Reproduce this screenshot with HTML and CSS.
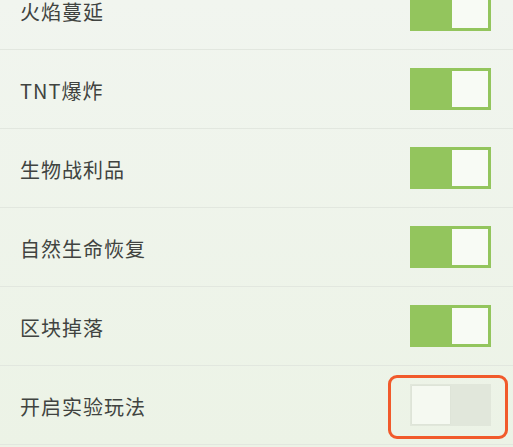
FILE: index.html
```html
<!DOCTYPE html>
<html lang="zh-CN">
<head>
    <meta charset="UTF-8">
    <meta name="viewport" content="width=device-width, initial-scale=1.0">
    <title>游戏设置</title>
    <link rel="stylesheet" href="styles.css">
</head>
<body>

    <div class="settings-list">
        <div class="setting-row">
            <span class="setting-name">火焰蔓延</span>
            <span class="toggle on"><span class="knob"></span></span>
        </div>
        <div class="setting-row">
            <span class="setting-name">TNT爆炸</span>
            <span class="toggle on"><span class="knob"></span></span>
        </div>
        <div class="setting-row">
            <span class="setting-name">生物战利品</span>
            <span class="toggle on"><span class="knob"></span></span>
        </div>
        <div class="setting-row">
            <span class="setting-name">自然生命恢复</span>
            <span class="toggle on"><span class="knob"></span></span>
        </div>
        <div class="setting-row">
            <span class="setting-name">区块掉落</span>
            <span class="toggle on"><span class="knob"></span></span>
        </div>
        <div class="setting-row">
            <span class="setting-name">开启实验玩法</span>
            <span class="toggle off highlight"><span class="knob"></span></span>
        </div>
    </div>

</body>
</html>
```

FILE: styles.css
```css
body {
    margin: 0;
    padding: 0;
    font-family: "Noto Sans CJK SC", "Noto Sans", sans-serif;
    background: linear-gradient(#f1f5ef, #ecf3e6);
    height: 447px;
    overflow: hidden;
}
.settings-list {
    margin-top: -29px;
}
.setting-row {
    display: flex;
    justify-content: space-between;
    align-items: center;
    height: 78px;
    padding: 0 22px 0 20px;
    border-bottom: 1px solid #e2e7df;
}
.setting-name {
    font-size: 20px;
    color: #404340;
    letter-spacing: 1px;
    padding-top: 2px;
}
.toggle {
    position: relative;
    display: flex;
    width: 81px;
    height: 42px;
    box-sizing: border-box;
    padding: 3px;
}
.toggle.on {
    background-color: #93c55d;
    justify-content: flex-end;
}
.toggle.off {
    background-color: #e1e7db;
    justify-content: flex-start;
    padding: 2px;
}
.knob {
    width: 36px;
    height: 100%;
    background-color: #f8fbf5;
}
.toggle.off .knob {
    width: 38px;
    background-color: #f5f9f1;
    box-shadow: 0 0 1px #cfd6c9;
}
.highlight::after {
    content: "";
    position: absolute;
    left: -22px;
    right: -17px;
    top: -9px;
    bottom: -13px;
    border: 3px solid #f15a2b;
    border-radius: 9px;
}
```
